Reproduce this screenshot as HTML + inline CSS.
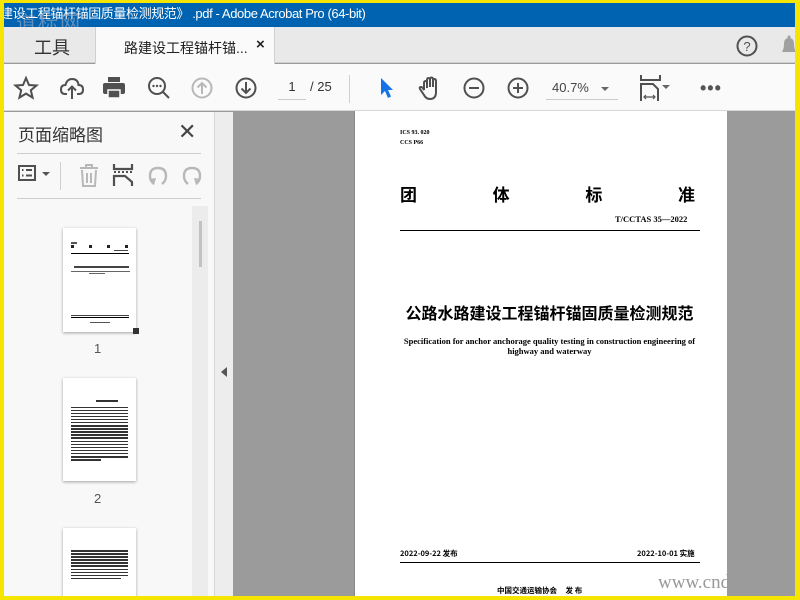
<!DOCTYPE html>
<html><head><meta charset="utf-8"><style>
*{margin:0;padding:0;box-sizing:border-box}
body{width:800px;height:600px;overflow:hidden;background:#f5e500;position:relative;font-family:"Liberation Sans","Noto Sans CJK SC",sans-serif}
.a{position:absolute}
.cj{font-family:"Noto Sans CJK SC",sans-serif}
svg{position:absolute;overflow:visible}
.ic{stroke:#505050;fill:none;stroke-width:2}
.dots i{display:block;height:1.5px;background:#333;margin-bottom:1.6px}
</style></head><body>
<div class="a" style="left:4px;top:3px;width:791px;height:593px;background:#9b9b9b;overflow:hidden">
 <div class="a" style="top:0;width:795px;height:24px;background:#0063b1;color:#fff;font-size:13px;letter-spacing:-0.4px;line-height:21px;white-space:nowrap;left:-4px">建设工程锚杆锚固质量检测规范》 .pdf - Adobe Acrobat Pro (64-bit)</div>
 <div class="a cj" style="left:12px;top:4px;font-size:20px;color:rgba(160,170,190,.6);letter-spacing:2px">道标网</div>
 <div class="a" style="left:0;top:24px;width:791px;height:36px;background:#e9e9e9;border-bottom:1px solid #cfcfcf"></div>
 <div class="a" style="left:30px;top:31px;font-size:18px;color:#333">工具</div>
 <div class="a" style="left:91px;top:24px;width:180px;height:37px;background:#fafafa;border-left:1px solid #d0d0d0;border-right:1px solid #d0d0d0"></div>
 <div class="a" style="left:120px;top:35px;font-size:14px;color:#222">路建设工程锚杆锚...</div>
 <div class="a" style="left:252px;top:33px;font-size:15px;font-weight:bold;color:#222">×</div>
 <svg style="left:732px;top:32px" width="22" height="22"><circle cx="11" cy="11" r="9.5" class="ic" stroke-width="2"/><text x="11" y="16" font-size="13" text-anchor="middle" fill="#505050" font-family="Liberation Sans">?</text></svg>
 <svg style="left:775px;top:31px" width="20" height="24"><path d="M3 18 Q5 15 5 10 Q5 4 10 4 Q15 4 15 10 Q15 15 17 18Z" fill="#a0a0a0"/><circle cx="10" cy="3" r="1.5" fill="#a0a0a0"/></svg>
 <div class="a" style="left:0;top:61px;width:791px;height:47px;background:#fafafa;border-bottom:1px solid #d7d7d7"></div>
 <svg style="left:10px;top:73px" width="24" height="24"><path d="M12 2 L15 9 L22.5 9.5 L16.8 14.3 L18.6 21.6 L12 17.6 L5.4 21.6 L7.2 14.3 L1.5 9.5 L9 9Z" class="ic" stroke-width="1.6"/></svg>
 <svg style="left:55px;top:73px" width="26" height="26"><path d="M8 18 H6 Q2 18 2 13.5 Q2 9 6.5 9 Q8 3 13 3 Q19 3 19.5 9 Q24 9 24 13.5 Q24 18 20 18 H18" class="ic"/><path d="M13 23 V11 M9 14.5 L13 10.5 L17 14.5" class="ic"/></svg>
 <svg style="left:98px;top:74px" width="24" height="22"><rect x="6" y="0" width="12" height="5" fill="#505050"/><rect x="1" y="6" width="22" height="11" rx="2" fill="#505050"/><rect x="6" y="13" width="12" height="8" fill="#505050" stroke="#fafafa" stroke-width="1.5"/></svg>
 <svg style="left:143px;top:73px" width="26" height="26"><circle cx="10" cy="10" r="8" class="ic"/><path d="M16 16 L22 22" class="ic" stroke-width="3"/><circle cx="6.5" cy="10" r="1.2" fill="#505050"/><circle cx="10" cy="10" r="1.2" fill="#505050"/><circle cx="13.5" cy="10" r="1.2" fill="#505050"/></svg>
 <svg style="left:187px;top:74px" width="22" height="22"><circle cx="11" cy="11" r="9.5" stroke="#b8b8b8" stroke-width="2" fill="none"/><path d="M11 17 V6 M6.5 10.5 L11 6 L15.5 10.5" stroke="#b8b8b8" stroke-width="2" fill="none"/></svg>
 <svg style="left:231px;top:74px" width="22" height="22"><circle cx="11" cy="11" r="9.5" class="ic"/><path d="M11 5 V16 M6.5 11.5 L11 16 L15.5 11.5" class="ic"/></svg>
 <div class="a" style="left:274px;top:76px;width:28px;font-size:13px;color:#333;text-align:center">1</div>
 <div class="a" style="left:274px;top:96px;width:28px;border-top:1px solid #ccc"></div>
 <div class="a" style="left:306px;top:76px;font-size:13px;color:#333">/ 25</div>
 <div class="a" style="left:345px;top:72px;width:1px;height:28px;background:#d0d0d0"></div>
 <svg style="left:375px;top:74px" width="16" height="24"><path d="M2 1 L2 18 L6 14 L9 21 L12 19.5 L9 13 L14 13Z" fill="#1473e6"/></svg>
 <svg style="left:414px;top:73px" width="26" height="26"><path d="M6 14 V7 Q6 5 7.5 5 Q9 5 9 7 V12 V4 Q9 2 10.5 2 Q12 2 12 4 V11 V3.5 Q12 1.5 13.5 1.5 Q15 1.5 15 3.5 V11 V5 Q15 3 16.5 3 Q18 3 18 5 V16 Q18 23 12 23 Q8 23 6 19 L2 13 Q1 11 3 11 Q4.5 11 6 14Z" class="ic" stroke-width="1.6"/></svg>
 <svg style="left:459px;top:74px" width="22" height="22"><circle cx="11" cy="11" r="9.5" class="ic"/><path d="M6 11 H16" class="ic"/></svg>
 <svg style="left:503px;top:74px" width="22" height="22"><circle cx="11" cy="11" r="9.5" class="ic"/><path d="M6 11 H16 M11 6 V16" class="ic"/></svg>
 <div class="a" style="left:548px;top:77px;font-size:13px;color:#444">40.7%</div>
 <div class="a" style="left:597px;top:84px;border-left:4px solid transparent;border-right:4px solid transparent;border-top:4px solid #666"></div>
 <div class="a" style="left:542px;top:96px;width:72px;border-top:1px solid #ccc"></div>
 <svg style="left:636px;top:72px" width="30" height="28"><path d="M1 0 V5 H20 V0" class="ic"/><path d="M1 26 V9 H13 L18 14 V26" class="ic"/><path d="M5 22 H14 M6 20 L4 22 L6 24 M13 20 L15 22 L13 24" stroke="#505050" stroke-width="1.2" fill="none"/><path d="M22 10 L30 10 L26 14Z" fill="#666"/></svg>
 <div class="a" style="left:696px;top:80px;font-size:18px;letter-spacing:1px;color:#555;line-height:10px;font-weight:bold">•••</div>
 <div class="a" style="left:0;top:109px;width:210px;height:490px;background:#f8f8f8"></div>
 <div class="a" style="left:14px;top:118px;font-size:17px;color:#333">页面缩略图</div>
 <div class="a" style="left:174px;top:116px;font-size:22px;color:#444">✕</div>
 <div class="a" style="left:13px;top:150px;width:184px;height:1px;background:#cdcdcd"></div>
 <div class="a" style="left:13px;top:195px;width:184px;height:1px;background:#cdcdcd"></div>
 <svg style="left:14px;top:162px" width="36" height="20"><rect x="1" y="1" width="16" height="14" class="ic" stroke-width="1.8"/><path d="M4 5 H5.5 M8 5 H14 M4 10.5 H5.5 M8 10.5 H14" class="ic" stroke-width="2"/><path d="M24 7 L32 7 L28 11Z" fill="#555"/></svg>
 <div class="a" style="left:56px;top:159px;width:1px;height:28px;background:#d0d0d0"></div>
 <svg style="left:74px;top:161px" width="22" height="24"><path d="M2 4 H20 M8 4 V1 H14 V4 M4 6 L5 22 H17 L18 6 M9 9 V19 M13 9 V19" stroke="#b8b8b8" stroke-width="2" fill="none"/></svg>
 <svg style="left:108px;top:161px" width="24" height="24"><path d="M2 0 V5 H20 V0" stroke="#505050" stroke-width="2.2" fill="none"/><path d="M2 8 H22" stroke="#505050" stroke-width="2" stroke-dasharray="2 2"/><path d="M2 22 V12 H13 L20 18 V22" stroke="#505050" stroke-width="2.2" fill="none"/></svg>
 <svg style="left:144px;top:162px" width="22" height="22"><path d="M6 19 Q2 16 2 11 Q2 3 10 3 Q18 3 18 11 Q18 16 14 19" stroke="#b8b8b8" stroke-width="2.4" fill="none"/><path d="M1 14 L6 20 L8 13Z" fill="#b8b8b8"/></svg>
 <svg style="left:178px;top:162px" width="22" height="22"><path d="M14 19 Q18 16 18 11 Q18 3 10 3 Q2 3 2 11 Q2 16 6 19" stroke="#b8b8b8" stroke-width="2.4" fill="none"/><path d="M19 14 L14 20 L12 13Z" fill="#b8b8b8"/></svg>
 <div class="a" style="left:188px;top:203px;width:16px;height:396px;background:#ececec"></div>
 <div class="a" style="left:195px;top:218px;width:3px;height:46px;background:#c2c2c2"></div>
 <div class="a" style="left:59px;top:225px;width:73px;height:104px;background:#fff;box-shadow:0 1px 3px rgba(0,0,0,.35)">
  <div class="a" style="left:8px;top:14px;width:6px;height:2px;background:#555"></div>
  <div class="a" style="left:8px;top:17px;width:3px;height:3px;background:#222"></div><div class="a" style="left:26px;top:17px;width:3px;height:3px;background:#222"></div><div class="a" style="left:44px;top:17px;width:3px;height:3px;background:#222"></div><div class="a" style="left:62px;top:17px;width:3px;height:3px;background:#222"></div>
  <div class="a" style="left:51px;top:22px;width:14px;height:1px;background:#444"></div>
  <div class="a" style="left:8px;top:25px;width:58px;height:1px;background:#000"></div>
  <div class="a" style="left:11px;top:38px;width:55px;height:2px;background:#444"></div>
  <div class="a" style="left:8px;top:43px;width:59px;height:1px;background:#666"></div>
  <div class="a" style="left:26px;top:45px;width:16px;height:1px;background:#666"></div>
  <div class="a" style="left:8px;top:87px;width:58px;height:1px;background:#444"></div>
  <div class="a" style="left:8px;top:89px;width:58px;height:1px;background:#000"></div>
  <div class="a" style="left:27px;top:94px;width:20px;height:1px;background:#555"></div>
 </div>
 <div class="a" style="left:129px;top:325px;width:6px;height:6px;background:#333"></div>
 <div class="a" style="left:90px;top:338px;font-size:13px;color:#555">1</div>
 <div class="a dots" style="left:59px;top:375px;width:73px;height:103px;background:#fff;box-shadow:0 1px 3px rgba(0,0,0,.35);padding:22px 8px 0 8px">
  <i style="width:22px;margin-left:25px;margin-bottom:5px"></i><i></i><i></i><i></i><i></i><i></i><i></i><i></i><i></i><i></i><i></i><i></i><i></i><i></i><i></i><i></i><i></i><i></i><i style="width:30px"></i>
 </div>
 <div class="a" style="left:90px;top:488px;font-size:13px;color:#555">2</div>
 <div class="a dots" style="left:59px;top:525px;width:73px;height:80px;background:#fff;box-shadow:0 1px 3px rgba(0,0,0,.35);padding:22px 8px 0 8px">
  <i></i><i></i><i></i><i></i><i></i><i></i><i></i><i></i><i></i><i style="width:50px"></i>
 </div>
 <div class="a" style="left:210px;top:109px;width:19px;height:490px;background:#ededed;border-left:1px solid #d5d5d5"></div>
 <div class="a" style="left:217px;top:364px;border-top:5px solid transparent;border-bottom:5px solid transparent;border-right:6px solid #555"></div>
 <div class="a" style="left:350px;top:108px;width:373px;height:495px;background:#fff;border-left:1px solid #888">
  <div class="a" style="left:45px;top:19px;font-size:6px;font-family:'Liberation Serif';font-weight:bold">ICS 93. 020</div>
  <div class="a" style="left:45px;top:29px;font-size:6px;font-family:'Liberation Serif';font-weight:bold">CCS P66</div>
  <div class="a cj" style="left:45px;top:70px;width:295px;font-size:17px;font-weight:bold;display:flex;justify-content:space-between"><span>团</span><span>体</span><span>标</span><span>准</span></div>
  <div class="a" style="left:260px;top:103px;font-size:8.5px;font-family:'Liberation Serif';font-weight:bold">T/CCTAS 35—2022</div>
  <div class="a" style="left:45px;top:119px;width:300px;height:1px;background:#000"></div>
  <div class="a cj" style="left:0;top:189px;width:389px;text-align:center;font-size:16px;font-weight:bold">公路水路建设工程锚杆锚固质量检测规范</div>
  <div class="a" style="left:40px;top:225px;width:309px;text-align:center;font-size:8.5px;line-height:10px;font-family:'Liberation Serif';font-weight:bold">Specification for anchor anchorage quality testing in construction engineering of highway and waterway</div>
  <div class="a cj" style="left:45px;top:437px;font-size:7.5px;font-weight:bold">2022-09-22 发布</div>
  <div class="a cj" style="left:282px;top:437px;font-size:7.5px;font-weight:bold">2022-10-01 实施</div>
  <div class="a" style="left:45px;top:451px;width:300px;height:1px;background:#000"></div>
  <div class="a cj" style="left:142px;top:474px;font-size:7.5px;font-weight:bold">中国交通运输协会&nbsp;&nbsp;&nbsp;&nbsp;&nbsp;发 布</div>
  <div class="a" style="left:303px;top:461px;font-size:19px;font-family:'Liberation Serif';color:#999;white-space:nowrap">www.cnd</div>
 </div>
</div>
</body></html>
